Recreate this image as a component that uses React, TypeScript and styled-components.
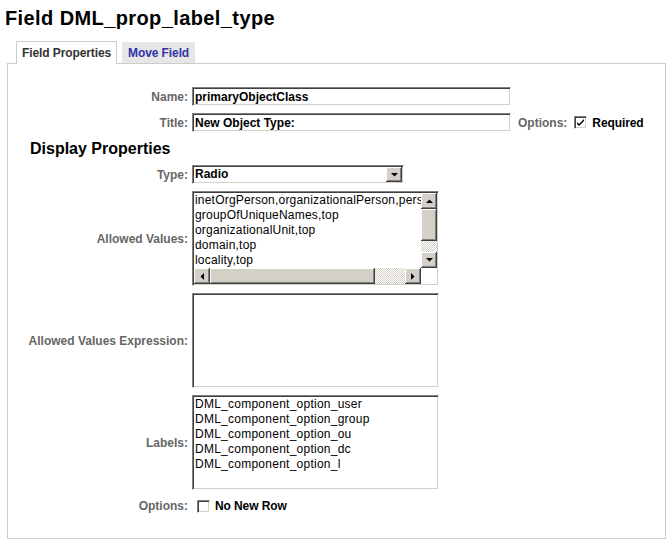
import React from "react";
import styled, { createGlobalStyle, css } from "styled-components";

const GlobalStyle = createGlobalStyle`
  html, body {
    margin: 0;
    padding: 0;
    background: #fff;
  }
  body {
    font-family: "Liberation Sans", Arial, sans-serif;
    font-size: 12px;
    color: #000;
  }
`;

// shared bevels
const inset = css`
  box-sizing: border-box;
  border: 1px solid;
  border-color: #808080 #fff #fff #808080;
  box-shadow: inset 1px 1px #404040, inset -1px -1px #d4d0c8;
  background: #fff;
`;

const raised = css`
  background: #d4d0c8;
  box-shadow: inset -1px -1px #404040, inset 1px 1px #fff, inset -2px -2px #808080;
`;

const checker = css`
  background: repeating-conic-gradient(#d4d0c8 0 25%, #fff 0 50%) 0 0 / 2px 2px;
`;

// page
const Page = styled.div`
  width: 670px;
  height: 541px;
  overflow: hidden;
`;

const PageTitle = styled.h1`
  margin: 7px 0 0 5px;
  font-size: 20px;
  line-height: 23px;
  letter-spacing: 0.4px;
  font-weight: bold;
`;

// tabs
const TabBar = styled.div`
  display: flex;
  align-items: flex-end;
  gap: 5px;
  height: 22px;
  margin: 11px 0 0 16px;
`;

const Tab = styled.div<{ $active?: boolean }>`
  display: flex;
  align-items: center;
  box-sizing: border-box;
  font-size: 12px;
  font-weight: bold;
  letter-spacing: -0.1px;
  ${({ $active }) =>
    $active
      ? css`
          position: relative;
          z-index: 1;
          height: 23px;
          margin-bottom: -1px;
          padding: 0 5px;
          background: #fff;
          border: 1px solid #ccc;
          border-bottom: none;
          color: #333;
        `
      : css`
          height: 21px;
          padding: 0 6px;
          background: #e6e6e6;
          color: #3333a8;
        `}
`;

const Panel = styled.div`
  box-sizing: border-box;
  width: 659px;
  height: 476px;
  margin-left: 7px;
  padding-top: 23px;
  border: 1px solid #ccc;
`;

// form
const Form = styled.div`
  display: grid;
  grid-template-columns: 180px auto;
  column-gap: 4px;
  row-gap: 7px;
  align-items: center;
  justify-items: start;
`;

const Label = styled.div`
  justify-self: end;
  color: #666;
  font-weight: bold;
  font-size: 12px;
`;

const SectionTitle = styled.div`
  grid-column: 1 / -1;
  padding-left: 22px;
  font-size: 16px;
  line-height: 19px;
  font-weight: bold;
`;

const TextField = styled.input`
  ${inset}
  width: 319px;
  height: 19px;
  margin: 0;
  padding: 0 0 0 2px;
  font-family: "Liberation Sans", Arial, sans-serif;
  font-size: 12px;
  font-weight: bold;
  color: #000;
  outline: none;
`;

const Inline = styled.div<{ $gap?: number; $height?: number }>`
  display: flex;
  align-items: center;
  gap: ${({ $gap }) => $gap ?? 6}px;
  height: ${({ $height }) => ($height ? `${$height}px` : "auto")};
`;

const OptionText = styled.span`
  font-weight: bold;
  font-size: 12px;
  letter-spacing: -0.1px;
  color: #000;
`;

const Box = styled.span<{ $left?: number; $right?: number }>`
  ${inset}
  display: flex;
  align-items: center;
  justify-content: center;
  width: 13px;
  height: 13px;
  margin-left: ${({ $left }) => $left ?? 0}px;
  margin-right: ${({ $right }) => $right ?? 0}px;
`;

const Select = styled.div`
  ${inset}
  display: flex;
  width: 212px;
  height: 19px;
  padding: 1px;
`;

const SelectValue = styled.div`
  flex: 1;
  padding-left: 1px;
  font-weight: bold;
  line-height: 15px;
`;

const Button = styled.div`
  ${raised}
  display: flex;
  align-items: center;
  justify-content: center;
  width: 16px;
  height: 100%;
`;

const ListBox = styled.div`
  ${inset}
  display: grid;
  grid-template-columns: 1fr 16px;
  grid-template-rows: 1fr 16px;
  width: 247px;
  height: 95px;
  padding: 1px;
`;

const ListItems = styled.div`
  overflow: hidden;
  white-space: nowrap;
  padding-left: 1px;
  line-height: 15px;
  letter-spacing: 0.2px;
`;

const VScroll = styled.div`
  display: grid;
  grid-template-rows: 16px 32px 1fr 16px;
`;

const HScroll = styled.div`
  display: grid;
  grid-template-columns: 16px 165px 1fr 16px;
`;

const Thumb = styled.div`
  ${raised}
`;

const Track = styled.div`
  ${checker}
`;

const Corner = styled.div`
  background: #fff;
`;

const TextBox = styled.textarea`
  ${inset}
  display: block;
  width: 247px;
  height: 95px;
  margin: 0;
  padding: 1px 2px;
  resize: none;
  overflow: hidden;
  outline: none;
  font-family: "Liberation Sans", Arial, sans-serif;
  font-size: 12px;
  line-height: 15px;
  letter-spacing: 0.25px;
  color: #000;
`;

type Dir = "up" | "down" | "left" | "right";

const arrowPoints: Record<Dir, string> = {
  up: "0,4 7,4 3.5,0.5",
  down: "0,0 7,0 3.5,3.5",
  left: "4,0 4,7 0.5,3.5",
  right: "0,0 0,7 3.5,3.5",
};

function Arrow({ dir }: { dir: Dir }) {
  const vertical = dir === "up" || dir === "down";
  return (
    <svg width={vertical ? 7 : 4} height={vertical ? 4 : 7} viewBox={vertical ? "0 0 7 4" : "0 0 4 7"}>
      <polygon points={arrowPoints[dir]} fill="#000" />
    </svg>
  );
}

function Check({ checked, left, right }: { checked?: boolean; left?: number; right?: number }) {
  return (
    <Box $left={left} $right={right}>
      {checked && (
        <svg width="7" height="7" viewBox="0 0 7 7">
          <path d="M0 3 L2 5 L7 0 L7 2 L2 7 L0 5 Z" fill="#000" />
        </svg>
      )}
    </Box>
  );
}

const allowedValues = [
  "inetOrgPerson,organizationalPerson,person,top",
  "groupOfUniqueNames,top",
  "organizationalUnit,top",
  "domain,top",
  "locality,top",
];

const labels = [
  "DML_component_option_user",
  "DML_component_option_group",
  "DML_component_option_ou",
  "DML_component_option_dc",
  "DML_component_option_l",
];

export default function App() {
  return (
    <Page>
      <GlobalStyle />
      <PageTitle>Field DML_prop_label_type</PageTitle>
      <TabBar>
        <Tab $active>Field Properties</Tab>
        <Tab>Move Field</Tab>
      </TabBar>
      <Panel>
        <Form>
          <Label>Name:</Label>
          <TextField readOnly value="primaryObjectClass" />

          <Label>Title:</Label>
          <Inline $gap={7}>
            <TextField readOnly value="New Object Type:" />
            <Label>Options:</Label>
            <Check checked right={-2} />
            <OptionText>Required</OptionText>
          </Inline>

          <SectionTitle>Display Properties</SectionTitle>

          <Label>Type:</Label>
          <Select>
            <SelectValue>Radio</SelectValue>
            <Button>
              <Arrow dir="down" />
            </Button>
          </Select>

          <Label>Allowed Values:</Label>
          <ListBox>
            <ListItems>
              {allowedValues.map((v) => (
                <div key={v}>{v}</div>
              ))}
            </ListItems>
            <VScroll>
              <Button>
                <Arrow dir="up" />
              </Button>
              <Thumb />
              <Track />
              <Button>
                <Arrow dir="down" />
              </Button>
            </VScroll>
            <HScroll>
              <Button>
                <Arrow dir="left" />
              </Button>
              <Thumb />
              <Track />
              <Button>
                <Arrow dir="right" />
              </Button>
            </HScroll>
            <Corner />
          </ListBox>

          <Label>Allowed Values Expression:</Label>
          <TextBox readOnly value="" />

          <Label>Labels:</Label>
          <TextBox readOnly value={labels.join("\n")} />

          <Label>Options:</Label>
          <Inline $gap={5} $height={18}>
            <Check left={5} />
            <OptionText>No New Row</OptionText>
          </Inline>
        </Form>
      </Panel>
    </Page>
  );
}
